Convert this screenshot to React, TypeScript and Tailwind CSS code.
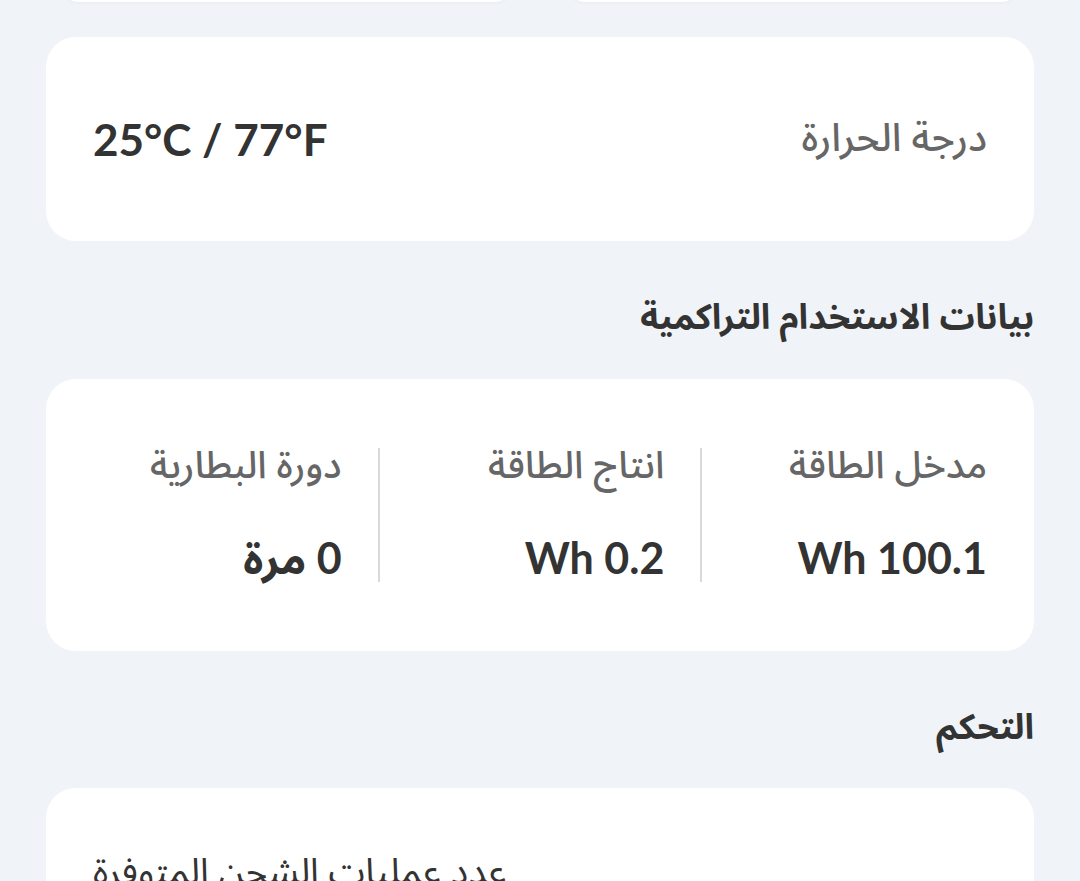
import React from "react";

const arabic = "font-['Noto_Sans_Arabic','Noto_Sans','DejaVu_Sans',sans-serif]";
const latin = "font-['Lato','Noto_Sans_Arabic','DejaVu_Sans',sans-serif]";

type Stat = { label: string; value: string };

const usage: Stat[] = [
  { label: "مدخل الطاقة", value: "100.1 Wh" },
  { label: "انتاج الطاقة", value: "0.2 Wh" },
  { label: "دورة البطارية", value: "0 مرة" },
];

function StatColumn({ stat }: { stat: Stat }) {
  return (
    <div className="flex-1 flex flex-col items-start">
      <div className={`${arabic} text-[38px] leading-[36px] font-medium text-[#666]`}>{stat.label}</div>
      <div className={`${latin} mt-[50px] text-[43px] leading-[48px] font-bold text-[#333]`}>
        {stat.value}
      </div>
    </div>
  );
}

function App() {
  return (
    <div dir="rtl" className="min-h-screen bg-[#f0f3f8] px-[46px] overflow-hidden">
      {/* cards scrolled off the top */}
      <div className="grid grid-cols-2 gap-[50px] mx-[12px] -mt-[40px]">
        <div className="h-[42px] rounded-[30px] bg-white shadow-[0_1px_3px_rgba(0,0,0,0.04)]" />
        <div className="h-[42px] rounded-[30px] bg-white shadow-[0_1px_3px_rgba(0,0,0,0.04)]" />
      </div>

      <div className="mt-[35px] h-[204px] rounded-[30px] bg-white px-[47px] flex items-center justify-between">
        <div className={`${arabic} text-[39px] font-medium text-[#666]`}>درجة الحرارة</div>
        <div dir="ltr" className={`${latin} text-[44px] font-bold text-[#333]`}>
          25°C / 77°F
        </div>
      </div>

      <h2 className={`${arabic} mt-[53px] mb-[37px] text-[35px] leading-[48px] font-bold text-[#333]`}>
        بيانات الاستخدام التراكمية
      </h2>

      <div className="h-[272px] rounded-[30px] bg-white px-[47px] flex items-center">
        <div className="flex w-full">
          {usage.map((s, i) => (
            <React.Fragment key={s.label}>
              {i > 0 && <div className="mx-9 w-[2px] self-stretch bg-[#d9d9d9]" />}
              <StatColumn stat={s} />
            </React.Fragment>
          ))}
        </div>
      </div>

      <h2 className={`${arabic} mt-[53px] mb-[36px] text-[35px] leading-[48px] font-bold text-[#333]`}>
        التحكم
      </h2>

      <div className="h-[200px] rounded-t-[30px] bg-white px-[47px] pt-[60px] flex justify-end">
        <div className={`${arabic} text-[37px] leading-[48px] text-[#333]`}>
          عدد عمليات الشحن المتوفرة
        </div>
      </div>
    </div>
  );
}

export default App;
